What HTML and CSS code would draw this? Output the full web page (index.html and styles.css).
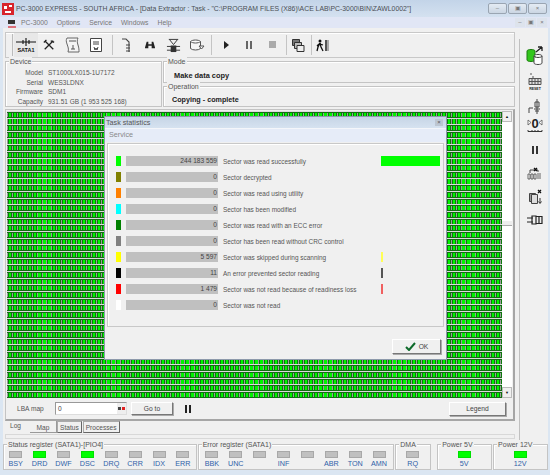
FILE: index.html
```html
<!DOCTYPE html>
<html lang="en">
<head>
    <meta charset="UTF-8">
    <title>PC-3000 Data Extractor</title>
    <link rel="stylesheet" href="styles.css">
</head>
<body>
<div class="window">
    <!-- Title bar -->
    <div class="titlebar">
        <svg class="app-icon" width="12" height="12" viewBox="0 0 12 12"><rect width="12" height="12" fill="#d8242c"/><path d="M2 3h3v3H2zM7 2h3v2H7zM3 8h6v2H3z" fill="#fff"/></svg>
        <span class="title-text">PC-3000 EXPRESS - SOUTH AFRICA - [Data Extractor : Task - "C:\PROGRAM FILES (X86)\ACE LAB\PC-3000\BIN\ZAWL0002"]</span>
        <div class="win-buttons">
            <span class="win-btn">&#8211;</span>
            <span class="win-btn">&#9635;</span>
            <span class="win-btn">&#215;</span>
        </div>
    </div>

    <!-- Menu -->
    <div class="menubar">
        <svg class="menu-icon" width="10" height="10" viewBox="0 0 10 10"><path d="M1 2h7v4H1z" fill="#333"/><path d="M1 9h8" stroke="#d8242c" stroke-width="1.2"/></svg>
        <span>PC-3000</span><span>Options</span><span>Service</span><span>Windows</span><span>Help</span>
        <div class="child-buttons"><span>&#8211;</span><span>&#9635;</span><span>&#215;</span></div>
    </div>

    <div class="workspace">
        <div class="main">
            <!-- Toolbar -->
            <div class="toolbar">
                <span class="grip"></span>
                <div class="tool tool-pressed">
                    <svg width="22" height="20" viewBox="0 0 22 20"><path d="M1 7h20M11 3v8M8 5v4M14 5v4" stroke="#111" stroke-width="1.1" fill="none"/><text x="11" y="17" class="sata-text">SATA1</text></svg>
                </div>
                <div class="tool"><svg width="12" height="12" viewBox="0 0 14 14"><path d="M2 2l10 10M12 2L2 12M1 4l3-3M9 2l4 2" stroke="#222" stroke-width="1.5" fill="none"/></svg></div>
                <div class="tool"><svg width="16" height="18" viewBox="0 0 16 18"><path d="M2 2h11c-1 2-1 4 0 7s1 5 1 7H3c1-3 0-5-1-8s-1-4 0-6z" fill="#f4f4f4" stroke="#666"/><path d="M4 5h7M8 9v4M6 13h4" stroke="#555" fill="none"/></svg></div>
                <div class="tool"><svg width="14" height="16" viewBox="0 0 14 16"><path d="M1.500 1.500h11v13h-11z" fill="#fff" stroke="#444"/><path d="M4 5h6M4 7h6M5 10l1 3 1-2 1 2 1-3" stroke="#444" fill="none"/></svg></div>
                <span class="tool-sep"></span>
                <div class="tool"><svg width="12" height="16" viewBox="0 0 12 16"><path d="M1 2h4l3 3v10M5 8h4M5 11h4M5 14h4" stroke="#444" stroke-width="1.1" fill="none"/></svg></div>
                <div class="tool"><svg width="12" height="10" viewBox="0 0 14 12"><path d="M1 9l2-7h2v8H1zM9 2h2l2 7v1H9zM5 5h4v2H5z" fill="#222"/></svg></div>
                <div class="tool"><svg width="15" height="15" viewBox="0 0 16 16"><path d="M3 1.500h10M4 2l4 5 4-5M1 9h14M1 13h14" stroke="#333" fill="none"/><path d="M5 8h6v7H5z" fill="#333"/></svg></div>
                <div class="tool"><svg width="16" height="14" viewBox="0 0 16 14"><path d="M1.500 3.500c2-2 8-2 10 0v7c-2 2-8 2-10 0z" fill="#f6f6f6" stroke="#555"/><path d="M1.500 3.500c2 2 8 2 10 0M10 8h5l-2.500 3z" fill="#fff" stroke="#555"/></svg></div>
                <span class="tool-sep sep-play"></span>
                <div class="tool"><svg width="8" height="10" viewBox="0 0 8 10"><path d="M2 1l5 4-5 4z" fill="#222"/></svg></div>
                <div class="tool"><svg width="8" height="10" viewBox="0 0 8 10"><path d="M1 1h2v8H1zM5 1h2v8H5z" fill="#666"/></svg></div>
                <div class="tool"><svg width="8" height="8" viewBox="0 0 8 8"><rect width="7" height="7" fill="#aaa"/></svg></div>
                <span class="tool-sep sep-stop"></span>
                <div class="tool tool-small"><svg width="14" height="14" viewBox="0 0 14 14"><path d="M1.500 1.500h7v6h-7z" fill="#777" stroke="#333"/><path d="M3.500 4.500h7v6h-7z" fill="#bbb" stroke="#333"/><path d="M6 7.500h7v6H6z" fill="#eee" stroke="#333"/></svg></div>
                <span class="tool-sep"></span>
                <div class="tool tool-small"><svg width="14" height="13" viewBox="0 0 14 13"><circle cx="4" cy="2" r="1.500" fill="#111"/><path d="M4 4L2 8 1 12M4 4l1 4 2 4M3 5L1 7M4 5l3 1" stroke="#111" stroke-width="1.300" fill="none"/><path d="M9 1h2v11H9z" fill="#555"/><path d="M11 1h2v11h-2z" fill="#aaa"/></svg></div>
            </div>

            <!-- Device and operation info -->
            <div class="info-row">
                <div class="group device">
                    <span class="group-title">Device</span>
                    <div class="device-grid">
                        <span>Model</span><span>ST1000LX015-1U7172</span>
                        <span>Serial</span><span>WES3LDNX</span>
                        <span>Firmware</span><span>SDM1</span>
                        <span>Capacity</span><span>931.51 GB (1 953 525 168)</span>
                    </div>
                </div>
                <div class="info-right">
                    <div class="group mode">
                        <span class="group-title">Mode</span>
                        <b class="mode-value">Make data copy</b>
                    </div>
                    <div class="group operation">
                        <span class="group-title">Operation</span>
                        <b class="operation-value">Copying - complete</b>
                    </div>
                </div>
            </div>

            <!-- Map tab -->
            <div class="tab-page">
                <div class="map-row">
                    <div class="sector-map"></div>
                    <div class="scrollbar">
                        <span class="scroll-btn">&#9650;</span>
                        <span class="scroll-track"><span class="scroll-thumb"></span></span>
                        <span class="scroll-btn scroll-btn-down">&#9660;</span>
                    </div>
                </div>
                <div class="map-controls">
                    <span class="lba-label">LBA map</span>
                    <div class="lba-input"><span>0</span><span class="lba-spin"><i></i><i></i></span></div>
                    <button class="btn goto-btn">Go to</button>
                    <svg class="pause-icon" width="6" height="8" viewBox="0 0 6 8"><path d="M0 0h2v8H0zM4 0h2v8H4z" fill="#222"/></svg>
                    <button class="btn legend-btn">Legend</button>
                </div>

                <!-- Statistics dialog -->
                <div class="dialog">
                    <div class="dialog-title"><span>Task statistics</span><span class="dialog-close">&#215;</span></div>
                    <div class="dialog-menu">Service</div>
                    <div class="stats">
                        <div class="stat-row"><i class="swatch c-green"></i><span class="count">244 183 559</span><span class="stat-label">Sector was read successfully</span><i class="share" style="width:59px;background:#00ff00"></i></div>
                        <div class="stat-row"><i class="swatch c-olive"></i><span class="count">0</span><span class="stat-label">Sector decrypted</span></div>
                        <div class="stat-row"><i class="swatch c-orange"></i><span class="count">0</span><span class="stat-label">Sector was read using utility</span></div>
                        <div class="stat-row"><i class="swatch c-cyan"></i><span class="count">0</span><span class="stat-label">Sector has been modified</span></div>
                        <div class="stat-row"><i class="swatch c-dkgreen"></i><span class="count">0</span><span class="stat-label">Sector was read with an ECC error</span></div>
                        <div class="stat-row"><i class="swatch c-gray"></i><span class="count">0</span><span class="stat-label">Sector has been read without CRC control</span></div>
                        <div class="stat-row"><i class="swatch c-yellow"></i><span class="count">5 597</span><span class="stat-label">Sector was skipped during scanning</span><i class="share" style="width:2px;background:#ffff55"></i></div>
                        <div class="stat-row"><i class="swatch c-black"></i><span class="count">11</span><span class="stat-label">An error prevented sector reading</span><i class="share" style="width:2px;background:#555"></i></div>
                        <div class="stat-row"><i class="swatch c-red"></i><span class="count">1 479</span><span class="stat-label">Sector was not read because of readiness loss</span><i class="share" style="width:2px;background:#f06060"></i></div>
                        <div class="stat-row"><i class="swatch c-white"></i><span class="count">0</span><span class="stat-label">Sector was not read</span></div>
                    </div>
                    <div class="dialog-footer">
                        <button class="btn ok-btn">
                            <svg width="11" height="9" viewBox="0 0 11 9"><path d="M1 5l3 3 6-7" stroke="#0e6a2a" stroke-width="2" fill="none"/></svg>
                            OK
                        </button>
                    </div>
                </div>
            </div>

            <!-- Tabs -->
            <div class="tabs">
                <span class="tab tab-log">Log</span>
                <span class="tab tab-map">Map</span>
                <span class="tab tab-boxed">Status</span>
                <span class="tab tab-boxed">Processes</span>
            </div>
            <div class="tab-strip"></div>
        </div>

        <!-- Right toolbar -->
        <div class="side-tools">
            <div class="side-tool"><svg width="18" height="20" viewBox="0 0 18 20"><path d="M1 5c0-2 8-2 8 0v9c0 2-8 2-8 0z" fill="#33c61c" stroke="#1d7a10"/><path d="M8 10c0-2 8-2 8 0v7c0 2-8 2-8 0zM8 10c0 2 8 2 8 0" fill="#fff" stroke="#444"/><path d="M10 6l6-5M16 1v4M16 1h-4" stroke="#222" stroke-width="1.300" fill="none"/></svg></div>
            <div class="side-tool"><svg width="14" height="17" viewBox="0 0 14 17"><path d="M1 5.500h12v6H1zM1 8.500h12M4 5v7M7 5v7M10 5v7M2 1h2M5 3v2" stroke="#555" fill="#ddd"/><text x="7" y="16.500" class="reset-text">RESET</text></svg></div>
            <div class="side-tool"><svg width="14" height="17" viewBox="0 0 14 17"><path d="M9 1v15M7 4h4v5H7zM6 11h6M7 13h4M1 15v-5h4" stroke="#444" fill="none"/></svg></div>
            <div class="side-tool"><svg width="16" height="16" viewBox="0 0 16 16"><text x="8" y="11" class="zero-text">0</text><path d="M1 3l3 2.500L1 8zM15 3l-3 2.500L15 8z" fill="#fff" stroke="#555" stroke-width=".8"/><path d="M1 13v1.500h14V13M5 13v1M8 13v1M11 13v1" stroke="#333" fill="none"/></svg></div>
            <div class="side-tool"><svg width="6" height="8" viewBox="0 0 6 8"><path d="M0 0h2v8H0zM4 0h2v8H4z" fill="#333"/></svg></div>
            <div class="side-tool"><svg width="15" height="13" viewBox="0 0 15 13"><path d="M1 7h2v5H1zM4 7h2v5H4zM7 7h2v5H7zM11 6v6M13 6v6" fill="#fff" stroke="#444" stroke-width=".8"/><path d="M3 6V3h8v2" stroke="#444" fill="none"/><path d="M7 1l3 3M10 1L7 4" stroke="#111" stroke-width="1.300"/></svg></div>
            <div class="side-tool"><svg width="14" height="16" viewBox="0 0 14 16"><path d="M1.500 4.500h6v8h-6z" fill="#999" stroke="#444"/><path d="M3.500 5.500h6v9h-6z" fill="#ddd" stroke="#444"/><path d="M10 1l3 3M13 1l-3 3" stroke="#111" stroke-width="1.300"/><path d="M12 9v5M10.500 12.500l1.500 2 1.500-2" stroke="#333" fill="none"/></svg></div>
            <div class="side-tool"><svg width="16" height="10" viewBox="0 0 16 10"><path d="M0 3h6M0 7h6M5 1h4v8H5zM9 1.500h6v7H9zM12 1v8" stroke="#222" stroke-width="1.200" fill="#eee"/></svg></div>
        </div>
    </div>

    <!-- Registers -->
    <div class="registers">
        <div class="group reg reg-status">
            <span class="group-title">Status register (SATA1)-[PIO4]</span>
            <div class="leds">
                <div class="led"><i></i>BSY</div>
                <div class="led on"><i></i>DRD</div>
                <div class="led"><i></i>DWF</div>
                <div class="led on"><i></i>DSC</div>
                <div class="led"><i></i>DRQ</div>
                <div class="led"><i></i>CRR</div>
                <div class="led"><i></i>IDX</div>
                <div class="led"><i></i>ERR</div>
            </div>
        </div>
        <div class="group reg reg-error">
            <span class="group-title">Error register (SATA1)</span>
            <div class="leds">
                <div class="led"><i></i>BBK</div>
                <div class="led"><i></i>UNC</div>
                <div class="led"><i></i>&nbsp;</div>
                <div class="led"><i></i>INF</div>
                <div class="led"><i></i>&nbsp;</div>
                <div class="led"><i></i>ABR</div>
                <div class="led"><i></i>TON</div>
                <div class="led"><i></i>AMN</div>
            </div>
        </div>
        <div class="group reg reg-dma">
            <span class="group-title">DMA</span>
            <div class="leds"><div class="led"><i></i>RQ</div></div>
        </div>
        <div class="group reg reg-5v">
            <span class="group-title">Power 5V</span>
            <div class="leds"><div class="led on"><i></i>5V</div></div>
        </div>
        <div class="group reg reg-12v">
            <span class="group-title">Power 12V</span>
            <div class="leds"><div class="led on"><i></i>12V</div></div>
        </div>
    </div>
</div>
</body>
</html>
```

FILE: styles.css
```css
/* General */
html, body {
    margin: 0;
    height: 100%;
}
body {
    width: 550px;
    height: 475px;
    overflow: hidden;
    font-family: "Liberation Sans", Arial, sans-serif;
    font-size: 6.600px;
    color: #444;
}
.window {
    width: 550px;
    height: 475px;
    background: #f0f0f0;
    border-bottom: 5px solid #dbe6f2;
    box-sizing: border-box;
    box-shadow: inset 3px 0 0 #dbe6f2, inset -2px 0 0 #dbe6f2;
}

/* Title bar */
.titlebar {
    height: 17px;
    display: flex;
    align-items: center;
    padding: 0 3px 0 2px;
    background: linear-gradient(#c3d4e8, #d4e1f0);
    box-sizing: border-box;
}
.app-icon {
    margin-right: 2px;
}
.title-text {
    font-size: 6.870px;
    color: #4a4f55;
    white-space: nowrap;
}
.win-buttons {
    margin-left: auto;
    display: flex;
    gap: 1px;
}
.win-btn {
    width: 17px;
    height: 9px;
    line-height: 9px;
    text-align: center;
    font-size: 6px;
    border: 1px solid #9aa5b2;
    border-radius: 2px;
    background: linear-gradient(#e4ebf3, #cbd6e3);
    color: #777;
}

/* Menu */
.menubar {
    height: 11px;
    display: flex;
    align-items: center;
    gap: 9px;
    padding: 0 3px 0 7px;
    font-size: 6.800px;
    color: #777;
    background: #e1e6f5;
}
.menu-icon {
    margin-right: -5px;
}
.child-buttons {
    margin-left: auto;
    display: flex;
    gap: 1px;
}
.child-buttons span {
    width: 10px;
    height: 9px;
    line-height: 9px;
    text-align: center;
    font-size: 6px;
    background: #dde3ec;
    color: #777;
}

/* Main layout */
.workspace {
    display: flex;
    height: 411px;
}
.main {
    width: 510px;
    margin-left: 5px;
    padding-top: 4px;
    box-sizing: border-box;
}

/* Toolbar */
.toolbar {
    height: 26px;
    display: flex;
    align-items: center;
    padding-left: 6px;
    border: 1px solid #c8c8c8;
    box-sizing: border-box;
    box-shadow: 0 1px 0 #fff inset;
}
.grip {
    width: 1px;
    height: 22px;
    margin-right: 1px;
    background: #bbb;
}
.tool {
    width: 23.500px;
    height: 24px;
    display: flex;
    align-items: center;
    justify-content: center;
    flex: none;
}
.tool-pressed {
    background: #e8e8e8;
}
.tool-small {
    width: 18px;
}
.tool-sep {
    width: 1px;
    height: 20px;
    flex: none;
    margin: 0 2px 0 4px;
    background: #c4c4c4;
}
.sep-play {
    margin: 0 2px 0 2px;
}
.sep-stop {
    margin: 0 2px 0 1px;
}
.sata-text {
    font: bold 5.500px "Liberation Sans", sans-serif;
    text-anchor: middle;
    fill: #111;
}

/* Group boxes */
.group {
    border: 1px solid #c4c4c4;
    box-sizing: border-box;
    box-shadow: 1px 1px 0 #fff inset;
}
.group-title {
    display: block;
    width: fit-content;
    height: 9px;
    line-height: 9px;
    margin: -5px 0 0 3px;
    padding: 0 1px;
    background: #f0f0f0;
    font-size: 7px;
    color: #555;
}

/* Device info */
.info-row {
    display: flex;
    gap: 1px;
    height: 46px;
    margin-top: 3px;
}
.device {
    width: 157px;
    height: 46px;
}
.device-grid {
    display: grid;
    grid-template-columns: 37px auto;
    column-gap: 5px;
    grid-auto-rows: 9.700px;
    margin-top: 2px;
    line-height: 9.700px;
    font-size: 6.500px;
    color: #555;
}
.device-grid span:nth-child(odd) {
    text-align: right;
}
.info-right {
    flex: 1;
    display: flex;
    flex-direction: column;
    gap: 3px;
}
.mode, .operation {
    height: 21.500px;
}
.mode-value {
    display: block;
    margin: 5px 0 0 10px;
    color: #222;
    font-size: 7.400px;
}
.operation-value {
    display: block;
    margin: 4px 0 0 8px;
    color: #222;
    font-size: 7.200px;
}

/* Map tab */
.tab-page {
    position: relative;
    height: 312px;
    margin-top: 2px;
    border-right: 2px solid #a6a6a6;
    border-bottom: 2px solid #a6a6a6;
    border-left: 1px solid #c4c4c4;
    border-top: 1px solid #c4c4c4;
    box-sizing: border-box;
    padding: 1px 0 0 1px;
}
.map-row {
    display: flex;
    height: 287px;
}
.sector-map {
    width: 495px;
    background-color: #00f400;
    background-image:
        repeating-linear-gradient(to bottom, #dcdcdc 0, #dcdcdc 1px, #117011 1px, #117011 1.800px, transparent 1.800px, transparent 5.900px, #117011 5.900px, #117011 6.670px),
        repeating-linear-gradient(to right, #9c9c9c 0, #9c9c9c 1px, #0c780c 1px, #0c780c 1.900px, transparent 1.900px, transparent 4.100px, #0c780c 4.100px, #0c780c 4.930px);
}
.scrollbar {
    width: 10px;
    display: flex;
    flex-direction: column;
    background: #fff;
}
.scroll-btn {
    height: 9px;
    line-height: 9px;
    text-align: center;
    font-size: 4px;
    background: #f0f0f0;
    border: 1px solid #bbb;
    box-sizing: content-box;
    color: #111;
}
.scroll-track {
    flex: 1;
    padding-top: 99px;
}
.scroll-thumb {
    display: block;
    height: 4px;
    background: #eee;
    border-bottom: 1px solid #aaa;
}
.map-controls {
    height: 21px;
    display: flex;
    align-items: center;
    padding-left: 10px;
}
.lba-label {
    width: 38px;
    color: #555;
    font-size: 6.600px;
}
.lba-input {
    width: 72px;
    height: 13px;
    display: flex;
    align-items: center;
    justify-content: space-between;
    padding-left: 2px;
    box-sizing: border-box;
    background: #fff;
    border: 1px solid #999;
    border-right-color: #ddd;
    border-bottom-color: #ddd;
}
.lba-spin {
    display: flex;
    gap: 1px;
    align-items: center;
    width: 9px;
    height: 11px;
    background: #eee;
    padding-left: 1px;
    box-sizing: border-box;
}
.lba-spin i {
    width: 3px;
    height: 3px;
    background: #444;
}
.lba-spin i + i {
    background: #e02020;
}
.btn {
    display: flex;
    align-items: center;
    justify-content: center;
    gap: 3px;
    padding: 0;
    font: 6.700px "Liberation Sans", Arial, sans-serif;
    color: #444;
    background: #f0f0f0;
    border: 1px solid #fff;
    border-right-color: #777;
    border-bottom-color: #777;
    box-shadow: 1px 1px 0 #aaa;
}
.goto-btn {
    width: 42px;
    height: 13px;
    margin-left: 4px;
}
.pause-icon {
    margin-left: 12px;
}
.legend-btn {
    width: 57px;
    height: 14px;
    margin-left: auto;
    margin-right: 7px;
}

/* Dialog */
.dialog {
    position: absolute;
    left: 98px;
    top: 6px;
    width: 343px;
    height: 244px;
    background: #f0f0f0;
    border: 1px solid #8d9aab;
    box-sizing: border-box;
}
.dialog-title {
    height: 11px;
    display: flex;
    align-items: center;
    justify-content: space-between;
    padding: 0 3px 0 1px;
    background: linear-gradient(#c6d5e6, #d6e2f0);
    font-size: 7.200px;
    color: #555;
}
.dialog-close {
    width: 8px;
    height: 7px;
    line-height: 7px;
    text-align: center;
    font-size: 6px;
    background: #bcc6d2;
    color: #555;
}
.dialog-menu {
    height: 13px;
    line-height: 11px;
    padding-left: 4px;
    background: #e6ecf8;
    border-top: 1px solid #f4f6fa;
    font-size: 7.200px;
    color: #888;
}
.stats {
    height: 184px;
    margin: 1px 2px 0 2px;
    padding-top: 9px;
    box-sizing: border-box;
    border: 1px solid #c8c8c8;
    box-shadow: 1px 1px 0 #fff inset;
}
.stat-row {
    height: 16px;
    display: flex;
    align-items: center;
    padding-left: 8px;
}
.swatch {
    width: 5px;
    height: 10px;
    flex: none;
}
.c-green { background: #00ff00; }
.c-olive { background: #808000; }
.c-orange { background: #ff8000; }
.c-cyan { background: #00ffff; }
.c-dkgreen { background: #008000; }
.c-gray { background: #808080; }
.c-yellow { background: #ffff00; }
.c-black { background: #000; }
.c-red { background: #ff0000; }
.c-white { background: #fff; }
.count {
    width: 92px;
    height: 10px;
    line-height: 10px;
    margin-left: 5px;
    padding-right: 1px;
    box-sizing: border-box;
    text-align: right;
    background: #c0c0c0;
    font-size: 6.600px;
    color: #444;
    flex: none;
}
.stat-label {
    width: 158px;
    margin-left: 5px;
    flex: none;
    white-space: nowrap;
    font-size: 6.450px;
    color: #555;
}
.share {
    height: 10px;
}
.dialog-footer {
    display: flex;
    justify-content: flex-end;
    padding: 12px 5px 0 0;
}
.ok-btn {
    width: 49px;
    height: 15px;
}

/* Tabs */
.tabs {
    display: flex;
    height: 13px;
    font-size: 6.600px;
    color: #555;
    margin-top: -1px;
}
.tab {
    height: 12px;
    line-height: 11px;
    text-align: center;
    box-sizing: border-box;
}
.tab-log {
    width: 25px;
    padding-right: 4px;
}
.tab-map {
    width: 27px;
    height: 13px;
    padding-top: 2px;
    border-right: 1px solid #999;
    border-bottom: 1px solid #999;
}
.tab-boxed {
    padding: 0 2px;
    border: 1px solid #aaa;
    border-right-color: #666;
    border-bottom-color: #666;
    margin-top: 1px;
}
.tab-boxed + .tab-boxed {
    margin-left: 1px;
}
.tab-strip {
    height: 5px;
    margin-top: 1px;
    border: 1px solid #d8d8d8;
    box-sizing: border-box;
}

/* Right toolbar */
.side-tools {
    width: 30px;
    height: 401px;
    margin: 11px 0 0 4px;
    padding-top: 5px;
    box-sizing: border-box;
    border-left: 1px solid #c0c0c0;
    display: flex;
    flex-direction: column;
    align-items: center;
}
.side-tool {
    height: 24px;
    flex: none;
    display: flex;
    align-items: center;
    justify-content: center;
}
/* icons are not evenly spaced in this toolbar */
.side-tool:nth-child(2), .side-tool:nth-child(3), .side-tool:nth-child(5) {
    margin-top: 1px;
}
.side-tool:nth-child(4) {
    margin-top: -5px;
}
.side-tool:nth-child(6), .side-tool:nth-child(8) {
    margin-top: -1px;
}
.reset-text {
    font: bold 3.500px "Liberation Sans", sans-serif;
    text-anchor: middle;
    fill: #222;
}
.zero-text {
    font: bold 13px "Liberation Sans", sans-serif;
    text-anchor: middle;
    fill: #222;
}

/* Registers */
.registers {
    display: flex;
    gap: 1px;
    margin: 5px 2px 0 3px;
    height: 26px;
}
.reg {
    height: 26px;
}
.reg .group-title {
    margin-left: 3px;
}
.reg-status { width: 194px; }
.reg-error { width: 197px; }
.reg-dma { width: 36px; }
.reg-5v { width: 55px; margin-left: 5px; }
.reg-12v { width: 55px; }
.leds {
    display: flex;
    justify-content: center;
    margin-top: 2px;
    margin-left: -1px;
}
.led {
    width: 23.900px;
    flex: none;
    display: flex;
    flex-direction: column;
    align-items: center;
    gap: 1px;
    font-size: 7.200px;
    line-height: 9px;
    color: #2f5fa8;
}
.led i {
    width: 13px;
    height: 7px;
    background: #c0c0c0;
    border: 1px solid #a8a8a8;
    box-sizing: border-box;
}
.led.on i {
    background: #00ff00;
    border-color: #00e000;
}
```
